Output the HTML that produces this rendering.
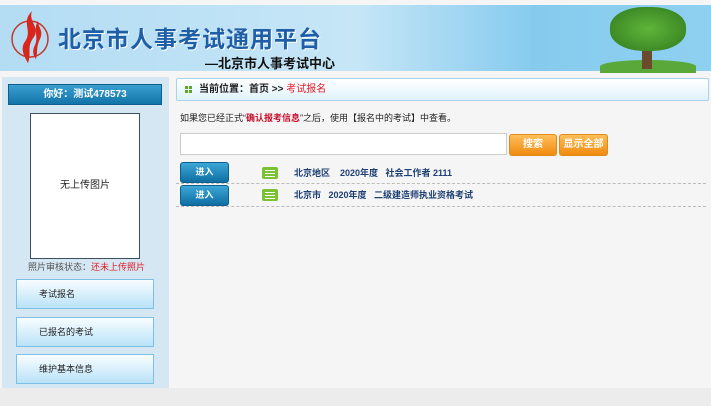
<!DOCTYPE html>
<html><head><meta charset="utf-8"><style>
*{margin:0;padding:0;box-sizing:border-box}
body{width:711px;height:406px;overflow:hidden;background:#f5f5f5;font-family:"Liberation Sans","Noto Sans CJK SC",sans-serif;font-size:9px;color:#222;position:relative}
.abs{position:absolute}
#hdr{left:0;top:5px;width:711px;height:66px;background:linear-gradient(90deg,#b3dcf3 0%,#c6e6f7 50%,#86cbee 75%,#8fd0f0 100%)}
.title{left:58px;top:15px;font-size:23px;font-weight:bold;color:#1f5fa8;letter-spacing:1px;text-shadow:1px 1px 0 #fff}
.sub{left:205px;top:48px;font-size:13px;font-weight:bold;color:#111}
#side{left:2px;top:77px;width:167px;height:311px;background:#d5e7f2}
.hello{left:8px;top:84px;width:154px;height:21px;background:linear-gradient(#3aa0d0,#1274a8);border:1px solid #0d5f8c;color:#fff;font-weight:bold;font-size:10px;text-align:center;line-height:19px}
.photo{left:30px;top:113px;width:110px;height:146px;background:#fff;border:1px solid #3b4f5e;text-align:center;line-height:144px;font-size:10px}
.stat{left:28px;top:260px;color:#555}
.nb{left:16px;width:138px;height:30px;border:1px solid #7cc0e6;background:linear-gradient(#f8fdff,#b9e2f8);padding-left:22px;line-height:28px;color:#222}
#bc{left:176px;top:78px;width:533px;height:23px;border:1px solid #a9d3ea;border-radius:2px;background:linear-gradient(#fff,#dff2fb);line-height:21px;padding-left:22px;font-weight:bold;font-size:10px}
.inp{left:180px;top:133px;width:327px;height:22px;background:#fff;border:1px solid #ccc}
.ob{top:134px;height:22px;background:linear-gradient(#ffbf5a,#f08a10);border:1px solid #e08a1a;border-radius:3px;color:#fff;font-weight:bold;text-align:center;line-height:20px;font-size:10px}
.eb{left:180px;width:49px;height:21px;background:linear-gradient(#3ca6d6,#0f6ea3);border:1px solid #0d5f8c;border-radius:3px;color:#fff;font-weight:bold;text-align:center;line-height:19px}
.ic{left:262px;width:16px;height:12px;background:#7cc033;border-radius:2px}
.ic:before{content:"";position:absolute;left:3px;top:3px;width:10px;height:1px;background:#fff;box-shadow:0 3px 0 #fff,0 6px 0 #fff}
.rt{left:294px;color:#1d3f73;font-weight:bold}
.dl{left:176px;width:530px;border-top:1px dashed #bbb}
.sq{position:absolute;width:3px;height:3px;background:#5ca82a}
</style></head><body>
<div id="hdr" class="abs">
<svg class="abs" style="left:8px;top:4px" width="44" height="56" viewBox="0 0 44 56"><circle cx="22" cy="30" r="18" fill="none" stroke="#c0392b" stroke-width="1.5"/><path d="M24 2 C12 14 26 22 16 34 C12 42 18 50 20 54 C24 44 18 38 26 28 C32 18 20 12 24 2Z" fill="#d8261c"/><path d="M30 12 C24 22 32 28 26 38 C24 44 26 48 28 50 C30 42 28 38 32 30 C36 22 30 18 30 12Z" fill="#d8261c"/></svg>
<div class="abs title">北京市人事考试通用平台</div>
<div class="abs sub">—北京市人事考试中心</div>
<div class="abs" style="left:600px;top:55px;width:96px;height:13px;border-radius:50% 50% 0 0;background:#5aa83a"></div>
<div class="abs" style="left:642px;top:40px;width:10px;height:24px;background:#6b4a2e"></div>
<div class="abs" style="left:610px;top:2px;width:76px;height:44px;border-radius:45%;background:radial-gradient(#5fb53a,#2f7a1e)"></div>
</div>
<div id="side" class="abs"></div>
<div class="abs hello">你好：测试478573</div>
<div class="abs photo">无上传图片</div>
<div class="abs stat">照片审核状态：<span style="color:#e0202a">还未上传照片</span></div>
<div class="abs nb" style="top:279px">考试报名</div>
<div class="abs nb" style="top:317px">已报名的考试</div>
<div class="abs nb" style="top:354px">维护基本信息</div>
<div id="bc" class="abs">当前位置：首页 &gt;&gt; <span style="color:#e0202a;font-weight:normal">考试报名</span>
<span class="sq" style="left:8px;top:7px"></span><span class="sq" style="left:12px;top:7px"></span><span class="sq" style="left:8px;top:11px"></span><span class="sq" style="left:12px;top:11px"></span></div>
<div class="abs" style="left:180px;top:111px">如果您已经正式“<span style="color:#c8102e;font-weight:bold">确认报考信息</span>”之后，使用【报名中的考试】中查看。</div>
<div class="abs inp"></div>
<div class="abs ob" style="left:509px;width:48px">搜索</div>
<div class="abs ob" style="left:559px;width:49px">显示全部</div>
<div class="abs eb" style="top:162px">进入</div>
<div class="abs ic" style="top:167px"></div>
<div class="abs rt" style="top:166px">北京地区&nbsp;&nbsp;&nbsp;&nbsp;2020年度&nbsp;&nbsp;&nbsp;社会工作者 2111</div>
<div class="abs dl" style="top:183px"></div>
<div class="abs eb" style="top:185px">进入</div>
<div class="abs ic" style="top:189px"></div>
<div class="abs rt" style="top:188px">北京市&nbsp;&nbsp;&nbsp;2020年度&nbsp;&nbsp;&nbsp;二级建造师执业资格考试</div>
<div class="abs dl" style="top:206px"></div>
<div class="abs" style="left:0;top:388px;width:711px;height:18px;background:#ececec"></div>
</body></html>
